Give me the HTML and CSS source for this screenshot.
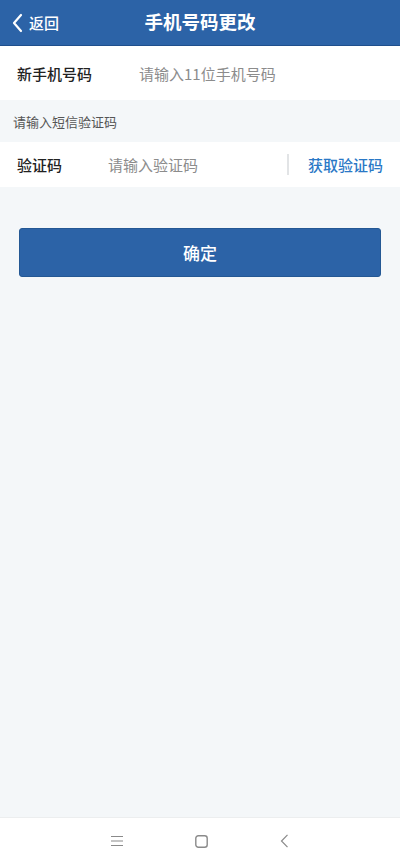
FILE: index.html
```html
<!DOCTYPE html>
<html lang="zh-CN">
<head>
<meta charset="utf-8">
<title>手机号码更改</title>
<link rel="stylesheet" href="styles.css">
</head>
<body>
<div class="page">
  <header class="topbar">
    <div class="back">
      <svg class="back-icon" width="12" height="20" viewBox="0 0 12 20"><path d="M10 2 L3 10 L10 18" fill="none" stroke="#fff" stroke-width="2.2" stroke-linecap="round" stroke-linejoin="round"/></svg>
      <span>返回</span>
    </div>
    <h1 class="title">手机号码更改</h1>
  </header>

  <div class="row row-phone">
    <span class="label">新手机号码</span>
    <span class="placeholder ph-phone">请输入11位手机号码</span>
  </div>

  <div class="hint">请输入短信验证码</div>

  <div class="row row-code">
    <span class="label">验证码</span>
    <span class="placeholder ph-code">请输入验证码</span>
    <span class="divider"></span>
    <span class="getcode">获取验证码</span>
  </div>

  <div class="btn-wrap">
    <button class="confirm">确定</button>
  </div>

  <div class="spacer"></div>

  <nav class="sysnav">
    <svg width="12" height="12" viewBox="0 0 12 12"><path d="M0 1.5H12M0 6H12M0 10.5H12" stroke="#8a8a8a" stroke-width="1.2"/></svg>
    <svg width="13" height="13" viewBox="0 0 13 13"><rect x="0.8" y="0.8" width="11.4" height="11.4" rx="2.5" fill="none" stroke="#8a8a8a" stroke-width="1.4"/></svg>
    <svg width="9" height="14" viewBox="0 0 9 14"><path d="M7.5 0.8 L1.5 7 L7.5 13.2" fill="none" stroke="#8a8a8a" stroke-width="1.2"/></svg>
  </nav>
</div>
</body>
</html>
```

FILE: styles.css
```css
* { box-sizing: border-box; margin: 0; padding: 0; }
html, body { width: 400px; height: 865px; }
body {
  background: #f4f7f9;
  font-family: "Noto Sans CJK SC", "Noto Sans", sans-serif;
  color: #222;
}
.page {
  height: 865px;
  display: flex;
  flex-direction: column;
}
.topbar {
  height: 46px;
  background: #2c63a7;
  border-bottom: 1px solid #1f4f8c;
  position: relative;
  display: flex;
  align-items: center;
  justify-content: center;
  flex-shrink: 0;
}
.back {
  position: absolute;
  left: 11px;
  top: 0;
  height: 45px;
  display: flex;
  align-items: center;
  gap: 6px;
  color: #fff;
  font-size: 15px;
  font-weight: 500;
}
.title {
  color: #fff;
  font-size: 18.5px;
  font-weight: 700;
  letter-spacing: 0;
  line-height: 1;
  margin-top: -2px;
}
.row {
  background: #fff;
  display: flex;
  align-items: center;
  padding-left: 17px;
  flex-shrink: 0;
}
.row-phone { height: 54px; }
.row-code { height: 45px; }
.label {
  font-size: 15px;
  color: #222;
  font-weight: 500;
}
.placeholder {
  font-size: 15px;
  color: #8c8c8c;
}
.ph-phone { margin-left: 47px; }
.ph-code { margin-left: 46px; }
.hint {
  height: 42px;
  display: flex;
  align-items: center;
  padding-left: 13px;
  font-size: 13px;
  color: #555;
  flex-shrink: 0;
}
.divider {
  width: 2px;
  height: 21px;
  background: #e2e4e6;
  margin-left: auto;
}
.getcode {
  font-size: 15px;
  color: #2a78c6;
  font-weight: 500;
  margin-left: 19px;
  margin-right: 17px;
}
.btn-wrap {
  padding: 41px 19px 0;
  flex-shrink: 0;
}
.confirm {
  width: 100%;
  height: 49px;
  background: #2c63a7;
  border: 1px solid #245894;
  border-radius: 3px;
  color: #fff;
  font-size: 17px;
  font-weight: 500;
  font-family: "Noto Sans CJK SC", "Noto Sans", sans-serif;
}
.spacer { flex: 1; }
.sysnav {
  height: 48px;
  background: #fff;
  border-top: 1px solid #eceeef;
  display: flex;
  align-items: center;
  justify-content: center;
  gap: 72px;
  padding-bottom: 1px;
  flex-shrink: 0;
}
```
